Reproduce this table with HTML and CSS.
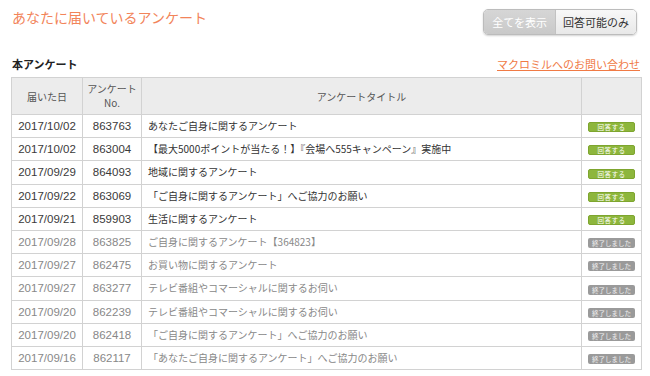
FILE: index.html
```html
<!DOCTYPE html>
<html lang="ja">
<head>
<meta charset="utf-8">
<title>あなたに届いているアンケート</title>
<link rel="stylesheet" href="styles.css">
</head>
<body>
<div class="page">
  <header class="top">
    <h1 class="title">あなたに届いているアンケート</h1>
    <div class="toggle">
      <span class="seg seg-active">全てを表示</span>
      <span class="seg">回答可能のみ</span>
    </div>
  </header>
  <div class="subhead">
    <h2 class="section">本アンケート</h2>
    <a class="contact" href="#">マクロミルへのお問い合わせ</a>
  </div>
  <table class="surveys">
    <colgroup>
      <col class="c-date"><col class="c-no"><col class="c-title"><col class="c-btn">
    </colgroup>
    <thead>
      <tr><th>届いた日</th><th><span class="hl">アンケート</span><span class="hl">No.</span></th><th>アンケートタイトル</th><th></th></tr>
    </thead>
    <tbody>
      <tr><td class="num">2017/10/02</td><td class="num">863763</td><td>あなたご自身に関するアンケート</td><td class="ctr"><span class="btn btn-go">回答する</span></td></tr>
      <tr><td class="num">2017/10/02</td><td class="num">863004</td><td>【最大5000ポイントが当たる！】『会場へ555キャンペーン』実施中</td><td class="ctr"><span class="btn btn-go">回答する</span></td></tr>
      <tr><td class="num">2017/09/29</td><td class="num">864093</td><td>地域に関するアンケート</td><td class="ctr"><span class="btn btn-go">回答する</span></td></tr>
      <tr><td class="num">2017/09/22</td><td class="num">863069</td><td>「ご自身に関するアンケート」へご協力のお願い</td><td class="ctr"><span class="btn btn-go">回答する</span></td></tr>
      <tr><td class="num">2017/09/21</td><td class="num">859903</td><td>生活に関するアンケート</td><td class="ctr"><span class="btn btn-go">回答する</span></td></tr>
      <tr class="done"><td class="num">2017/09/28</td><td class="num">863825</td><td>ご自身に関するアンケート【364823】</td><td class="ctr"><span class="btn btn-end">終了しました</span></td></tr>
      <tr class="done"><td class="num">2017/09/27</td><td class="num">862475</td><td>お買い物に関するアンケート</td><td class="ctr"><span class="btn btn-end">終了しました</span></td></tr>
      <tr class="done"><td class="num">2017/09/27</td><td class="num">863277</td><td>テレビ番組やコマーシャルに関するお伺い</td><td class="ctr"><span class="btn btn-end">終了しました</span></td></tr>
      <tr class="done"><td class="num">2017/09/20</td><td class="num">862239</td><td>テレビ番組やコマーシャルに関するお伺い</td><td class="ctr"><span class="btn btn-end">終了しました</span></td></tr>
      <tr class="done"><td class="num">2017/09/20</td><td class="num">862418</td><td>「ご自身に関するアンケート」へご協力のお願い</td><td class="ctr"><span class="btn btn-end">終了しました</span></td></tr>
      <tr class="done"><td class="num">2017/09/16</td><td class="num">862117</td><td>「あなたご自身に関するアンケート」へご協力のお願い</td><td class="ctr"><span class="btn btn-end">終了しました</span></td></tr>
    </tbody>
  </table>
</div>
</body>
</html>
```

FILE: styles.css
```css
html, body {
  margin: 0;
  padding: 0;
  background: #fff;
}
body {
  font-family: "Noto Sans CJK JP", "Liberation Sans", sans-serif;
  color: #333;
}
.page {
  padding: 9px 10px 0 11px;
}
.top {
  display: flex;
  justify-content: space-between;
  align-items: flex-start;
}
.title {
  margin: 0 0 0 1px;
  font-size: 14px;
  line-height: 17px;
  font-weight: normal;
  color: #f2845a;
}
.toggle {
  display: flex;
  height: 26px;
  box-sizing: border-box;
  border: 1px solid #bcbcbc;
  border-radius: 5px;
  overflow: hidden;
  box-shadow: 0 1px 2px rgba(0, 0, 0, 0.18);
  margin-right: 3px;
}
.seg {
  display: flex;
  align-items: center;
  padding: 0 7px;
  font-size: 11px;
  color: #333;
  background: linear-gradient(#f8f8f8, #e8e8e8);
}
.seg-active {
  color: #fff;
  padding: 0 8px;
  background: linear-gradient(#d6d6d6, #c9c9c9);
  border-right: 1px solid #c2c2c2;
}
.subhead {
  display: flex;
  justify-content: space-between;
  align-items: baseline;
  margin-top: 22px;
  height: 20px;
}
.section {
  margin: 0 0 0 1px;
  font-size: 11px;
  line-height: 15px;
  font-weight: bold;
  color: #222;
}
.contact {
  font-size: 11px;
  line-height: 15px;
  color: #f07a45;
  text-decoration: underline;
}
.surveys {
  border-collapse: collapse;
  table-layout: fixed;
  width: 630px;
  font-family: "Noto Sans CJK JP", "Liberation Sans", sans-serif;
  font-size: 10px;
}
.c-date { width: 71px; }
.c-no { width: 59px; }
.c-title { width: 440px; }
.c-btn { width: 60px; }
.surveys th,
.surveys td {
  border: 1px solid #d2d2d2;
}
.surveys th {
  height: 36px;
  padding: 0;
  background: #ececec;
  font-weight: normal;
  color: #555;
  line-height: 13px;
}
.hl {
  display: block;
  line-height: 14px;
}
.surveys td {
  height: 22.2px;
  padding: 0 6px;
  line-height: 12px;
  white-space: nowrap;
  color: #333;
}
.surveys td.num {
  text-align: center;
  padding: 0;
  font-family: "Liberation Sans", sans-serif;
  font-size: 11.5px;
  color: #3a3a3a;
}
.surveys td.ctr {
  text-align: center;
  padding: 0;
}
.surveys tr.done td {
  color: #888;
}
.btn {
  display: inline-block;
  width: 47px;
  height: 10px;
  box-sizing: border-box;
  border-radius: 2px;
  font-family: "Noto Sans CJK JP", sans-serif;
  font-size: 6.5px;
  line-height: 10px;
  text-align: center;
  vertical-align: middle;
  color: #fff;
}
.btn-go {
  background: #8db63c;
  border: 1px solid #7ea52f;
  line-height: 8px;
  letter-spacing: 0.5px;
}
.btn-end {
  background: #9a9a9a;
  color: #f0f0f0;
  line-height: 10px;
}
```
